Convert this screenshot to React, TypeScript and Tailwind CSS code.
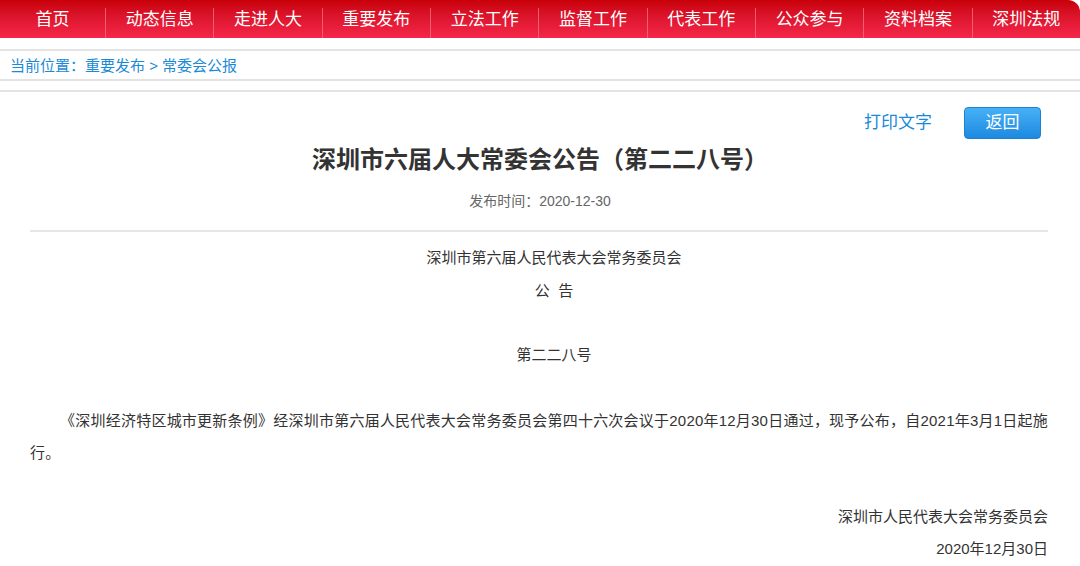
const NAV = ["首页", "动态信息", "走进人大", "重要发布", "立法工作", "监督工作", "代表工作", "公众参与", "资料档案", "深圳法规"]

const FONT = "font-['Liberation_Sans','Noto_Sans_CJK_SC',sans-serif]"

export default function App() {
  return (
    <div className={`${FONT} min-h-[566px] w-[1080px] bg-white text-[#333]`}>
      {/* red top menu */}
      <nav className="flex h-[38px] rounded-tr-[12px] bg-gradient-to-b from-[#c80006] to-[#f6264a]">
        {NAV.map((item, i) => (
          <div key={item} className={`flex ${i === 0 ? "w-[105px]" : "flex-1"}`}>
            {i > 0 && <span className="h-[30px] w-px self-end bg-[#f47a8a]/70" />}
            <a className="flex flex-1 items-center justify-center pt-[2px] text-[17px] text-white">{item}</a>
          </div>
        ))}
      </nav>

      {/* breadcrumb */}
      <div className="mt-[11px] flex h-[32px] items-center border-y-2 border-[#e3e3e3] pt-[3px] pl-[10px] text-[15px] text-[#1a8ad6]">
        当前位置：重要发布 &gt; 常委会公报
      </div>
      <div className="mt-[9px] border-t-2 border-[#e3e3e3]" />

      {/* tools */}
      <div className="flex items-center justify-end gap-[32px] pt-[15px] pr-[39px]">
        <a className="text-[17px] text-[#1a8ad6]">打印文字</a>
        <button className="h-[32px] w-[77px] rounded-[4px] border border-[#1c82d2] bg-gradient-to-b from-[#46b0f6] to-[#1c8ae0] text-[17px] text-white">
          返回
        </button>
      </div>

      <h1 className="mt-[6px] text-center text-[24px] leading-[30px] font-bold text-[#333]">
        深圳市六届人大常委会公告（第二二八号）
      </h1>
      <p className="mt-[16px] text-center text-[14px] leading-[20px] text-[#666]">发布时间：2020-12-30</p>
      <hr className="mt-[19px] mr-[32px] ml-[30px] border-t-2 border-[#e6e6e6]" />

      {/* body */}
      <div className="mr-[32px] ml-[30px] pt-[10px] text-[15px] leading-[32.5px] text-[#333] [&>p]:indent-[2em]">
        <p className="text-center">深圳市第六届人民代表大会常务委员会</p>
        <p className="text-center">公&nbsp;&nbsp;告</p>
        <p className="mt-[32px] text-center">第二二八号</p>
        <p className="mt-[33px] text-justify tracking-[0.2px]">
          《深圳经济特区城市更新条例》经深圳市第六届人民代表大会常务委员会第四十六次会议于2020年12月30日通过，现予公布，自2021年3月1日起施行。
        </p>
        <p className="mt-[31px] text-right">深圳市人民代表大会常务委员会</p>
        <p className="text-right">2020年12月30日</p>
      </div>
    </div>
  )
}
